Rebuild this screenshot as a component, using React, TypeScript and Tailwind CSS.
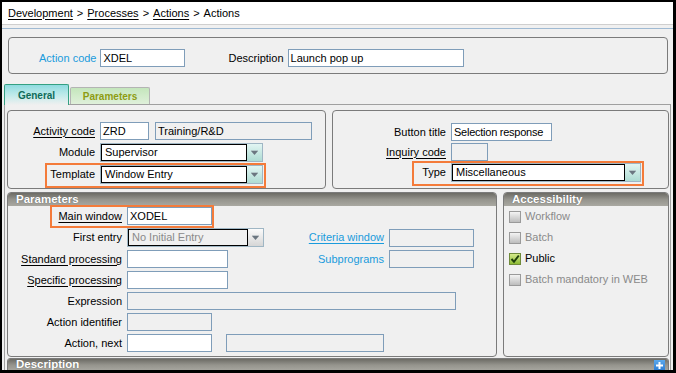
import React from "react";

function Field({ w, value = "", disabled = false, tight = false }: { w: string; value?: string; disabled?: boolean; tight?: boolean }) {
  return (
    <div
      className={`h-[18px] ${w} shrink-0 border border-[#7f9db9] px-[2px] flex items-center whitespace-nowrap overflow-hidden ${
        disabled ? "bg-[#f0f0f0]" : "bg-white"
      } ${tight ? "tracking-[-0.25px]" : ""}`}
    >
      {value}
    </div>
  );
}

function Select({ w, value, disabled = false }: { w: string; value: string; disabled?: boolean }) {
  return (
    <div className={`h-[19px] ${w} shrink-0 flex border border-[#9fb6c4]`}>
      <div
        className={`flex-1 border border-black px-[3px] flex items-center whitespace-nowrap ${
          disabled ? "bg-[#f0f0f0] text-[#8a8a8a]" : "bg-white"
        }`}
      >
        {value}
      </div>
      <div
        className={`w-[15px] flex items-center justify-center bg-gradient-to-b ${
          disabled ? "from-[#fbfbfb] to-[#d6d6d6]" : "from-[#e2f5f3] to-[#aedcd3]"
        }`}
      >
        <svg width="7" height="5" viewBox="0 0 7 5">
          <path d="M0 1h7L3.5 5z" fill="#6b7680" />
          <path d="M0 0h7" stroke="#9aa4ac" strokeWidth="1" />
        </svg>
      </div>
    </div>
  );
}

function Label({ w, children, underline = false, blue = false }: { w: string; children: React.ReactNode; underline?: boolean; blue?: boolean }) {
  return (
    <div
      className={`${w} shrink-0 text-right whitespace-nowrap mr-[5px] ${underline ? "underline underline-offset-2" : ""} ${
        blue ? "text-[#1a9bdc]" : ""
      }`}
    >
      {children}
    </div>
  );
}

function Highlight({ box }: { box: string }) {
  return <span className={`absolute ${box} border-2 border-[#f47b3a] pointer-events-none`} />;
}

function BarTitle({ children }: { children: React.ReactNode }) {
  return (
    <div className="h-[13px] shrink-0 bg-gradient-to-b from-[#6c6b65] via-[#95948d] to-[#a9a8a1] pl-[8px] flex items-center text-white font-bold text-[11.5px] leading-none [text-shadow:0_0_1px_#555]">
      {children}
    </div>
  );
}

function Check({ label, checked = false }: { label: string; checked?: boolean }) {
  return (
    <div className="h-[21px] flex items-center pl-[5px]">
      {checked ? (
        <div className="w-[12px] h-[12px] border border-[#6f8a3a] bg-gradient-to-b from-[#d5ea8a] to-[#8dbb32] flex items-center justify-center">
          <svg width="10" height="10" viewBox="0 0 10 10">
            <path d="M1.5 5 L4 7.8 L8.8 1.5" fill="none" stroke="#1f3f0c" strokeWidth="2" />
          </svg>
        </div>
      ) : (
        <div className="w-[12px] h-[12px] border border-[#9a9a9a] bg-gradient-to-b from-[#f4f4f4] to-[#bdbdbd]" />
      )}
      <span className={`ml-[4px] ${checked ? "text-black" : "text-[#8a8a8a]"}`}>{label}</span>
    </div>
  );
}

export default function App() {
  return (
    <div className="w-[676px] h-[373px] bg-black pt-[2px] pl-[2px] pr-[3px] pb-[3px] font-['Liberation_Sans',Arial,sans-serif] text-[11px] text-black">
      <div className="h-full bg-[#f0f0f0] overflow-hidden flex flex-col">
        {/* breadcrumb */}
        <div className="h-[23px] shrink-0 bg-white border-b border-[#cfcfcf] flex items-center pl-[6px]">
          <span className="underline underline-offset-2">Development</span>
          <span className="mx-[4px]">&gt;</span>
          <span className="underline underline-offset-2">Processes</span>
          <span className="mx-[4px]">&gt;</span>
          <span className="underline underline-offset-2">Actions</span>
          <span className="mx-[4px]">&gt;</span>
          <span>Actions</span>
        </div>
        <div className="h-[4px] shrink-0 border-b border-[#9fbad3]" />

        {/* header box */}
        <div className="mt-[8px] ml-[6px] mr-[5px] h-[37px] shrink-0 border border-[#7b7b7b] rounded-[4px] pt-[11px] flex items-start">
          <div className="ml-[30px] h-[18px] flex items-center text-[#1a9bdc] mr-[4px]">Action code</div>
          <Field w="w-[85px]" value="XDEL" />
          <div className="ml-[43px] h-[18px] flex items-center mr-[4px]">Description</div>
          <Field w="w-[176px]" value="Launch pop up" />
        </div>

        {/* tabs */}
        <div className="mt-[10px] ml-[2px] mr-[2px] h-[21px] shrink-0 flex items-end border-b border-[#a0a0a0]">
          <div className="w-[65px] h-[21px] -mb-[1px] border border-b-0 border-[#34a082] rounded-t-[2px] bg-gradient-to-b from-[#8edbe0] via-[#bfeaea] to-[#f0f0f0] flex items-center justify-center font-bold text-[10px] text-[#0e6b59]">
            General
          </div>
          <div className="w-[80px] h-[17px] ml-[1px] border border-b-0 border-[#b4b4b4] rounded-t-[2px] bg-gradient-to-b from-[#c4e6bc] to-[#dff0da] flex items-center justify-center font-bold text-[10px] text-[#8d9c12]">
            Parameters
          </div>
        </div>

        {/* tab frame */}
        <div className="flex-1 ml-[2px] mr-[2px] border-x border-[#a0a0a0] pt-[5px] pl-[2px] pr-[1px] flex flex-col">
          <div className="flex gap-[6px] h-[79px] shrink-0">
            {/* left group */}
            <div className="w-[319px] border border-[#7b7b7b] rounded-[4px] pt-[11px] flex flex-col gap-[3px]">
              <div className="flex items-center">
                <Label w="w-[87px]" underline>Activity code</Label>
                <Field w="w-[49px]" value="ZRD" />
                <div className="ml-[6px]">
                  <Field w="w-[157px]" value="Training/R&D" disabled />
                </div>
              </div>
              <div className="flex items-center">
                <Label w="w-[87px]">Module</Label>
                <Select w="w-[163px]" value="Supervisor" />
              </div>
              <div className="flex items-center relative">
                <Label w="w-[87px]">Template</Label>
                <Select w="w-[163px]" value="Window Entry" />
                <Highlight box="left-[37px] -top-[2px] w-[221px] h-[25px]" />
              </div>
            </div>

            {/* right group */}
            <div className="flex-1 border border-[#7b7b7b] rounded-[4px] pt-[12px] flex flex-col gap-[2px]">
              <div className="flex items-center">
                <Label w="w-[113px]">Button title</Label>
                <Field w="w-[101px]" value="Selection response" tight />
              </div>
              <div className="flex items-center">
                <Label w="w-[113px]" underline>Inquiry code</Label>
                <Field w="w-[37px]" disabled />
              </div>
              <div className="flex items-center relative">
                <Label w="w-[113px]">Type</Label>
                <Select w="w-[190px]" value="Miscellaneous" />
                <Highlight box="left-[79px] -top-[2px] w-[232px] h-[25px]" />
              </div>
            </div>
          </div>

          <div className="mt-[3px] flex gap-[6px] h-[165px] shrink-0">
            {/* parameters */}
            <div className="w-[490px] border border-[#7b7b7b] rounded-[4px] overflow-hidden flex flex-col">
              <BarTitle>Parameters</BarTitle>
              <div className="pt-[1px] flex flex-col gap-[3px]">
                <div className="flex items-center relative">
                  <Label w="w-[114px]" underline>Main window</Label>
                  <Field w="w-[85px]" value="XODEL" />
                  <Highlight box="left-[42px] -top-[2px] w-[164px] h-[23px]" />
                </div>
                <div className="flex items-center">
                  <Label w="w-[114px]">First entry</Label>
                  <Select w="w-[137px]" value="No Initial Entry" disabled />
                  <Label w="w-[120px]" underline blue>Criteria window</Label>
                  <Field w="w-[85px]" disabled />
                </div>
                <div className="flex items-center">
                  <Label w="w-[114px]" underline>Standard processing</Label>
                  <Field w="w-[101px]" />
                  <Label w="w-[156px]" blue>Subprograms</Label>
                  <Field w="w-[85px]" disabled />
                </div>
                <div className="flex items-center">
                  <Label w="w-[114px]" underline>Specific processing</Label>
                  <Field w="w-[101px]" />
                </div>
                <div className="flex items-center">
                  <Label w="w-[114px]">Expression</Label>
                  <Field w="w-[329px]" disabled />
                </div>
                <div className="flex items-center">
                  <Label w="w-[114px]">Action identifier</Label>
                  <Field w="w-[85px]" disabled />
                </div>
                <div className="flex items-center">
                  <Label w="w-[114px]">Action, next</Label>
                  <Field w="w-[85px]" />
                  <div className="ml-[14px]">
                    <Field w="w-[158px]" disabled />
                  </div>
                </div>
              </div>
            </div>

            {/* accessibility */}
            <div className="flex-1 border border-[#7b7b7b] rounded-[4px] overflow-hidden flex flex-col">
              <BarTitle>Accessibility</BarTitle>
              <div className="flex flex-col">
                <Check label="Workflow" />
                <Check label="Batch" />
                <Check label="Public" checked />
                <Check label="Batch mandatory in WEB" />
              </div>
            </div>
          </div>

          {/* description bar */}
          <div className="mt-[1px] h-[14px] shrink-0 border border-[#7b7b7b] rounded-t-[3px] overflow-hidden flex">
            <div className="flex-1 bg-gradient-to-b from-[#6c6b65] via-[#95948d] to-[#a9a8a1] pl-[8px] pr-[3px] flex items-center justify-between text-white font-bold text-[11.5px] leading-none [text-shadow:0_0_1px_#555]">
              <span>Description</span>
              <div className="w-[11px] h-[10px] bg-gradient-to-b from-[#5aa8ec] to-[#2f7fd4] flex items-center justify-center">
                <svg width="7" height="7" viewBox="0 0 7 7">
                  <path d="M3.5 0v7M0 3.5h7" stroke="white" strokeWidth="2" />
                </svg>
              </div>
            </div>
          </div>
        </div>
      </div>
    </div>
  );
}
